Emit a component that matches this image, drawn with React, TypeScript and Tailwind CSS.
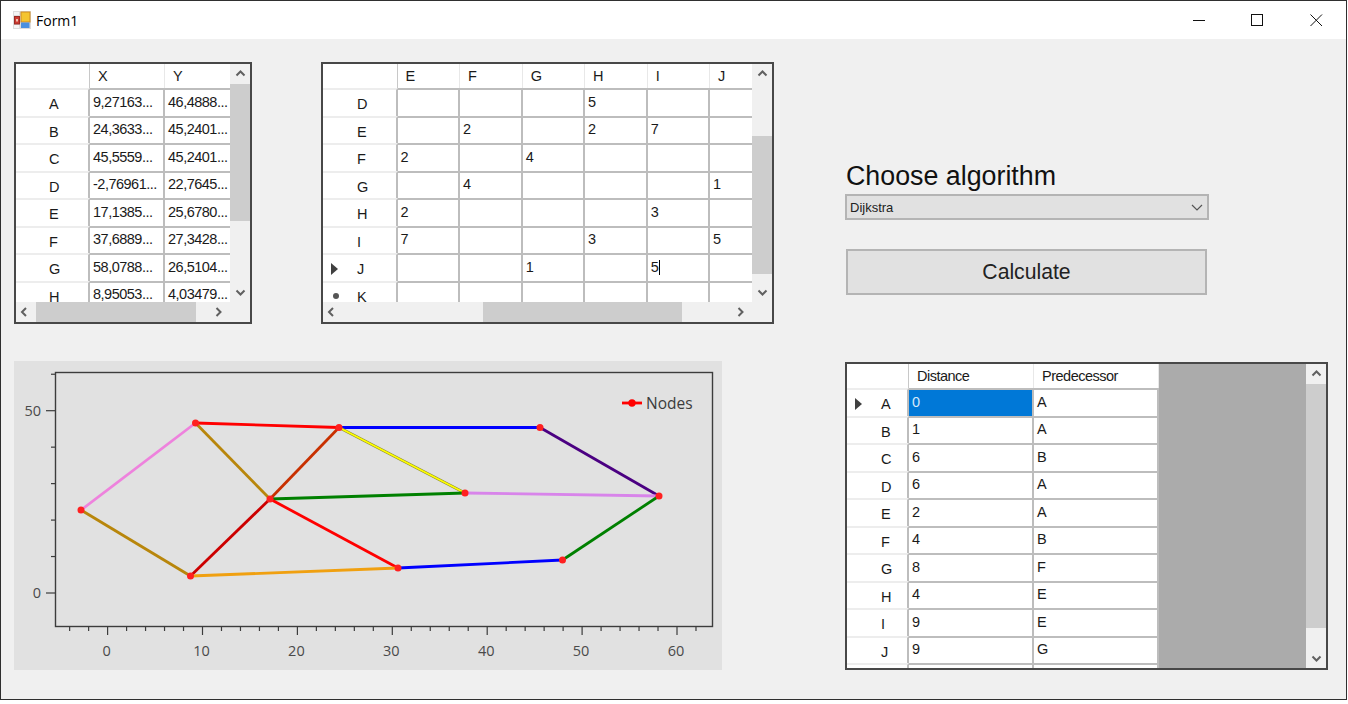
import React from "react";

const FONT = "font-['Liberation_Sans',Arial,sans-serif]";

function Chevron({ dir, className = "" }: { dir: "up" | "down" | "left" | "right"; className?: string }) {
  const d = {
    up: "M1.5 6.5 L5.5 2.5 L9.5 6.5",
    down: "M1.5 3.5 L5.5 7.5 L9.5 3.5",
    left: "M7 1 L3 5 L7 9",
    right: "M3.5 1 L7.5 5 L3.5 9",
  }[dir];
  return (
    <svg width="11" height="10" viewBox="0 0 11 10" className={className}>
      <path d={d} fill="none" stroke="#606060" strokeWidth="2" />
    </svg>
  );
}

function VScroll({ before, thumb, after }: { before: number; thumb: number; after: number }) {
  return (
    <div className="flex w-[20px] shrink-0 flex-col bg-[#f0f0f0]">
      <div className="flex justify-center pt-[5px]" style={{ height: before }}>
        <Chevron dir="up" />
      </div>
      <div className="bg-[#cdcdcd]" style={{ height: thumb }} />
      <div className="flex flex-1 items-end justify-center" style={{ height: after }}>
        <Chevron dir="down" className="mb-[5px]" />
      </div>
    </div>
  );
}

function HScroll({ before, thumb }: { before: number; thumb: number }) {
  return (
    <div className="flex h-[20px] shrink-0 bg-[#f0f0f0]">
      <div className="flex items-center pl-[3px]" style={{ width: before }}>
        <Chevron dir="left" />
      </div>
      <div className="bg-[#cdcdcd]" style={{ width: thumb }} />
      <div className="flex flex-1 items-center justify-end pr-[26px]">
        <Chevron dir="right" />
      </div>
    </div>
  );
}

function RowMark({ kind }: { kind?: "arrow" | "star" }) {
  if (kind === "arrow")
    return (
      <svg width="7" height="12" viewBox="0 0 7 12" className="absolute left-[8px] top-[8px]">
        <path d="M0 0 L7 6 L0 12 Z" fill="#404040" />
      </svg>
    );
  if (kind === "star") return <span className="absolute left-[10px] top-[10px] size-[6px] rounded-full bg-[#555]" />;
  return null;
}

type Row = { head: string; cells: string[]; mark?: "arrow" | "star"; caret?: number; selected?: number };

function Grid({
  cols,
  headW,
  headers,
  rows,
  headText,
  fill,
}: {
  cols: number[];
  headW: number;
  headers: string[];
  rows: Row[];
  headText: number;
  fill?: boolean;
}) {
  return (
    <div className={`${fill ? "bg-[#ababab]" : "bg-white"} min-w-0 flex-1 overflow-hidden`}>
      <div className="flex h-[24px] w-max bg-white">
        <div className="shrink-0 border-r border-[#c8c8c8]" style={{ width: headW }} />
        {headers.map((h, i) => (
          <div
            key={h}
            className="flex shrink-0 items-center border-r border-[#e8e8e8] pl-[8px] pt-[1px] text-[14.5px] tracking-[-0.5px] text-[#1a1a1a]"
            style={{ width: cols[i] }}
          >
            {h}
          </div>
        ))}
      </div>
      {rows.map((r) => (
        <div key={r.head} className="flex h-[27.5px] w-max">
          <div
            className="relative flex shrink-0 items-center justify-start border-t-2 border-r-2 border-t-[#ededed] border-r-[#bdbdbd] bg-white pt-[5px] text-[14.5px] tracking-[-0.5px] text-[#1a1a1a]"
            style={{ width: headW, paddingLeft: headText }}
          >
            <RowMark kind={r.mark} />
            {r.head}
          </div>
          {r.cells.map((c, i) => (
            <div
              key={i}
              className={`flex shrink-0 items-center overflow-hidden whitespace-nowrap border-t-2 border-r-2 border-[#bdbdbd] pl-[3px] text-[14.5px] tracking-[-0.5px] ${
                r.selected === i ? "bg-[#0078d7] text-[#d6e9fa]" : "bg-white text-[#1a1a1a]"
              }`}
              style={{ width: cols[i] }}
            >
              {c}
              {r.caret === i && <span className="ml-[1px] h-[15px] w-px bg-black" />}
            </div>
          ))}
        </div>
      ))}
    </div>
  );
}

const grid1Rows: Row[] = [
  ["A", "9,27163...", "46,4888..."],
  ["B", "24,3633...", "45,2401..."],
  ["C", "45,5559...", "45,2401..."],
  ["D", "-2,76961...", "22,7645..."],
  ["E", "17,1385...", "25,6780..."],
  ["F", "37,6889...", "27,3428..."],
  ["G", "58,0788...", "26,5104..."],
  ["H", "8,95053...", "4,03479..."],
].map(([head, a, b]) => ({ head, cells: [a, b] }));

const grid2Rows: Row[] = [
  { head: "D", cells: ["", "", "", "5", "", ""] },
  { head: "E", cells: ["", "2", "", "2", "7", ""] },
  { head: "F", cells: ["2", "", "4", "", "", ""] },
  { head: "G", cells: ["", "4", "", "", "", "1"] },
  { head: "H", cells: ["2", "", "", "", "3", ""] },
  { head: "I", cells: ["7", "", "", "3", "", "5"] },
  { head: "J", cells: ["", "", "1", "", "5", ""], mark: "arrow", caret: 4 },
  { head: "K", cells: ["", "", "", "", "", ""], mark: "star" },
];

const grid3Rows: Row[] = [
  { head: "A", cells: ["0", "A"], mark: "arrow", selected: 0 },
  { head: "B", cells: ["1", "A"] },
  { head: "C", cells: ["6", "B"] },
  { head: "D", cells: ["6", "A"] },
  { head: "E", cells: ["2", "A"] },
  { head: "F", cells: ["4", "B"] },
  { head: "G", cells: ["8", "F"] },
  { head: "H", cells: ["4", "E"] },
  { head: "I", cells: ["9", "E"] },
  { head: "J", cells: ["9", "G"] },
  { head: " ", cells: ["", ""] },
];

const N = {
  A: [195.5, 423],
  B: [339, 427.5],
  C: [540, 427.5],
  D: [81, 510],
  E: [270, 499],
  F: [465, 493],
  G: [659, 496],
  H: [190.5, 576],
  I: [398, 568],
  J: [562.5, 560],
} as const;
type K = keyof typeof N;

const edges: [K, K, string][] = [
  ["D", "A", "#ee82dd"],
  ["D", "H", "#b8860b"],
  ["A", "B", "#ff0000"],
  ["A", "E", "#b8860b"],
  ["B", "C", "#0000ff"],
  ["E", "B", "#c83000"],
  ["H", "E", "#cc0000"],
  ["B", "F", "#8f8f30"],
  ["B", "F", "#ffff00"],
  ["E", "F", "#008000"],
  ["E", "I", "#ff0000"],
  ["C", "G", "#4b0082"],
  ["F", "G", "#d884ea"],
  ["G", "J", "#008000"],
  ["H", "I", "#f0a010"],
  ["I", "J", "#0000ff"],
];

function Chart() {
  const ox = 14;
  const oy = 361;
  const X = (v: number) => 107.6 + v * 9.49 - ox;
  const Y = (v: number) => 593 - v * 3.646 - oy;
  const xMinor: number[] = [];
  for (let v = -4; v <= 62; v += 2) xMinor.push(v);
  const yTicks = [0, 10, 20, 30, 40, 50, 60];
  const font = { fontFamily: "'Open Sans','Noto Sans',sans-serif" };
  return (
    <div className="h-[309px] w-[708px] shrink-0 bg-[#e1e1e1]">
      <svg width="708" height="309" viewBox="0 0 708 309" className="block">
        <rect x="41.5" y="11.5" width="657" height="254" fill="none" stroke="#3c3c3c" strokeWidth="1.4" />
        {xMinor.map((v) => (
          <line key={v} x1={X(v)} x2={X(v)} y1="265" y2={v % 10 === 0 ? 274 : 270} stroke="#3c3c3c" strokeWidth="1.2" />
        ))}
        {yTicks.map((v) => (
          <line
            key={v}
            x1={v % 50 === 0 ? 32 : 37}
            x2="41"
            y1={Y(v)}
            y2={Y(v)}
            stroke="#3c3c3c"
            strokeWidth="1.2"
          />
        ))}
        {[0, 10, 20, 30, 40, 50, 60].map((v) => (
          <text key={v} x={X(v) - 1} y="294.5" textAnchor="middle" fontSize="14.5" fill="#4a4a4a" style={font}>
            {v}
          </text>
        ))}
        <text x="27" y={Y(50) + 5} textAnchor="end" fontSize="14.5" fill="#4a4a4a" style={font}>
          50
        </text>
        <text x="27" y={Y(0) + 5} textAnchor="end" fontSize="14.5" fill="#4a4a4a" style={font}>
          0
        </text>
        {edges.map(([a, b, c], i) => (
          <line
            key={i}
            x1={N[a][0] - ox}
            y1={N[a][1] - oy}
            x2={N[b][0] - ox}
            y2={N[b][1] - oy}
            stroke={c}
            strokeWidth={c === "#ffff00" ? 1.6 : 2.8}
          />
        ))}
        {(Object.keys(N) as K[]).map((k) => (
          <circle key={k} cx={N[k][0] - ox} cy={N[k][1] - oy} r="3.5" fill="#ff2020" />
        ))}
        <line x1="608" x2="628" y1="42" y2="42" stroke="#ff0000" strokeWidth="2.8" />
        <circle cx="618" cy="42" r="3.7" fill="#ff0000" />
        <text x="632" y="47.5" fontSize="15.5" fill="#3c3c3c" style={font}>
          Nodes
        </text>
      </svg>
    </div>
  );
}

function AppIcon() {
  return (
    <svg width="18" height="18" viewBox="0 0 18 18" className="shrink-0">
      <rect x="0" y="0" width="18" height="18" fill="#dcdcdc" />
      <rect x="1" y="1" width="5" height="3" fill="#f4f4f4" />
      <rect x="1" y="14" width="5" height="3" fill="#f4f4f4" />
      <rect x="8" y="1" width="9" height="10" fill="#f4c430" stroke="#d08a20" />
      <rect x="1.5" y="5.5" width="5" height="7.5" fill="#cc3a30" stroke="#9a2a24" />
      <rect x="3" y="8" width="2" height="2.5" fill="#f0c0b0" />
      <rect x="8" y="11.5" width="8.5" height="5.5" fill="#4a90e0" />
    </svg>
  );
}

export default function App() {
  return (
    <div className={`${FONT} h-[704px] w-[1348px] overflow-hidden bg-white`}>
      <div className="h-[700px] w-[1347px] border border-[#2f2f2f] bg-[#f0f0f0]">
        {/* title bar */}
        <div className="flex h-[38px] items-center bg-white pl-[12px]">
          <AppIcon />
          <span className="ml-[5px] font-['Open_Sans',sans-serif] text-[14px] text-black">Form1</span>
          <div className="ml-auto flex items-center">
            <svg width="13" height="13" viewBox="0 0 13 13" className="mr-[45px]">
              <line x1="0" x2="12" y1="6.5" y2="6.5" stroke="#111" />
            </svg>
            <svg width="13" height="13" viewBox="0 0 13 13" className="mr-[46px]">
              <rect x="0.5" y="0.5" width="11" height="11" fill="none" stroke="#111" />
            </svg>
            <svg width="13" height="13" viewBox="0 0 13 13" className="mr-[23px]">
              <path d="M0.5 0.5 L12 12 M12 0.5 L0.5 12" stroke="#111" fill="none" />
            </svg>
          </div>
        </div>

        {/* top row */}
        <div className="ml-[13px] mt-[23px] flex items-start">
          <div className="flex h-[262px] w-[238px] shrink-0 flex-col border-2 border-[#484848]">
            <div className="flex min-h-0 flex-1">
              <Grid cols={[75, 67]} headW={74} headers={["X", "Y"]} rows={grid1Rows} headText={33} />
              <VScroll before={20} thumb={137} after={81} />
            </div>
            <HScroll before={20} thumb={160} />
          </div>

          <div className="ml-[69px] flex h-[262px] w-[453px] shrink-0 flex-col border-2 border-[#484848]">
            <div className="flex min-h-0 flex-1">
              <Grid
                cols={[62.6, 62.6, 62.4, 62.6, 62.4, 62.6]}
                headW={74.5}
                headers={["E", "F", "G", "H", "I", "J"]}
                rows={grid2Rows}
                headText={34}
              />
              <VScroll before={72} thumb={138} after={28} />
            </div>
            <HScroll before={160} thumb={199} />
          </div>

          <div className="ml-[71px] flex w-[364px] shrink-0 flex-col pt-[99px]">
            <div className="pl-[1px] text-[26.8px] leading-[30px] text-[#111]">Choose algorithm</div>
            <div className="mt-[3px] flex h-[26px] items-center justify-between border-2 border-[#b4b4b4] bg-[#e1e1e1] pl-[3px] pr-[4px] pt-[1px] text-[13px] text-[#222]">
              <span>Dijkstra</span>
              <svg width="12" height="8" viewBox="0 0 12 8">
                <path d="M1 1 L6 6 L11 1" fill="none" stroke="#555" strokeWidth="1.2" />
              </svg>
            </div>
            <div className="ml-[1px] mt-[29px] flex h-[46px] w-[361px] items-center justify-center border-2 border-[#b4b4b4] bg-[#e1e1e1] text-[21.2px] text-[#222]">
              Calculate
            </div>
          </div>
        </div>

        {/* bottom row */}
        <div className="ml-[13px] mt-[37px] flex items-start">
          <Chart />
          <div className="ml-[123px] mt-[1px] flex h-[308px] w-[483px] shrink-0 border-2 border-[#484848]">
            <Grid cols={[125, 124.5]} headW={62} headers={["Distance", "Predecessor"]} rows={grid3Rows} headText={34} fill />
            <VScroll before={20} thumb={244} after={40} />
          </div>
        </div>
      </div>
    </div>
  );
}
